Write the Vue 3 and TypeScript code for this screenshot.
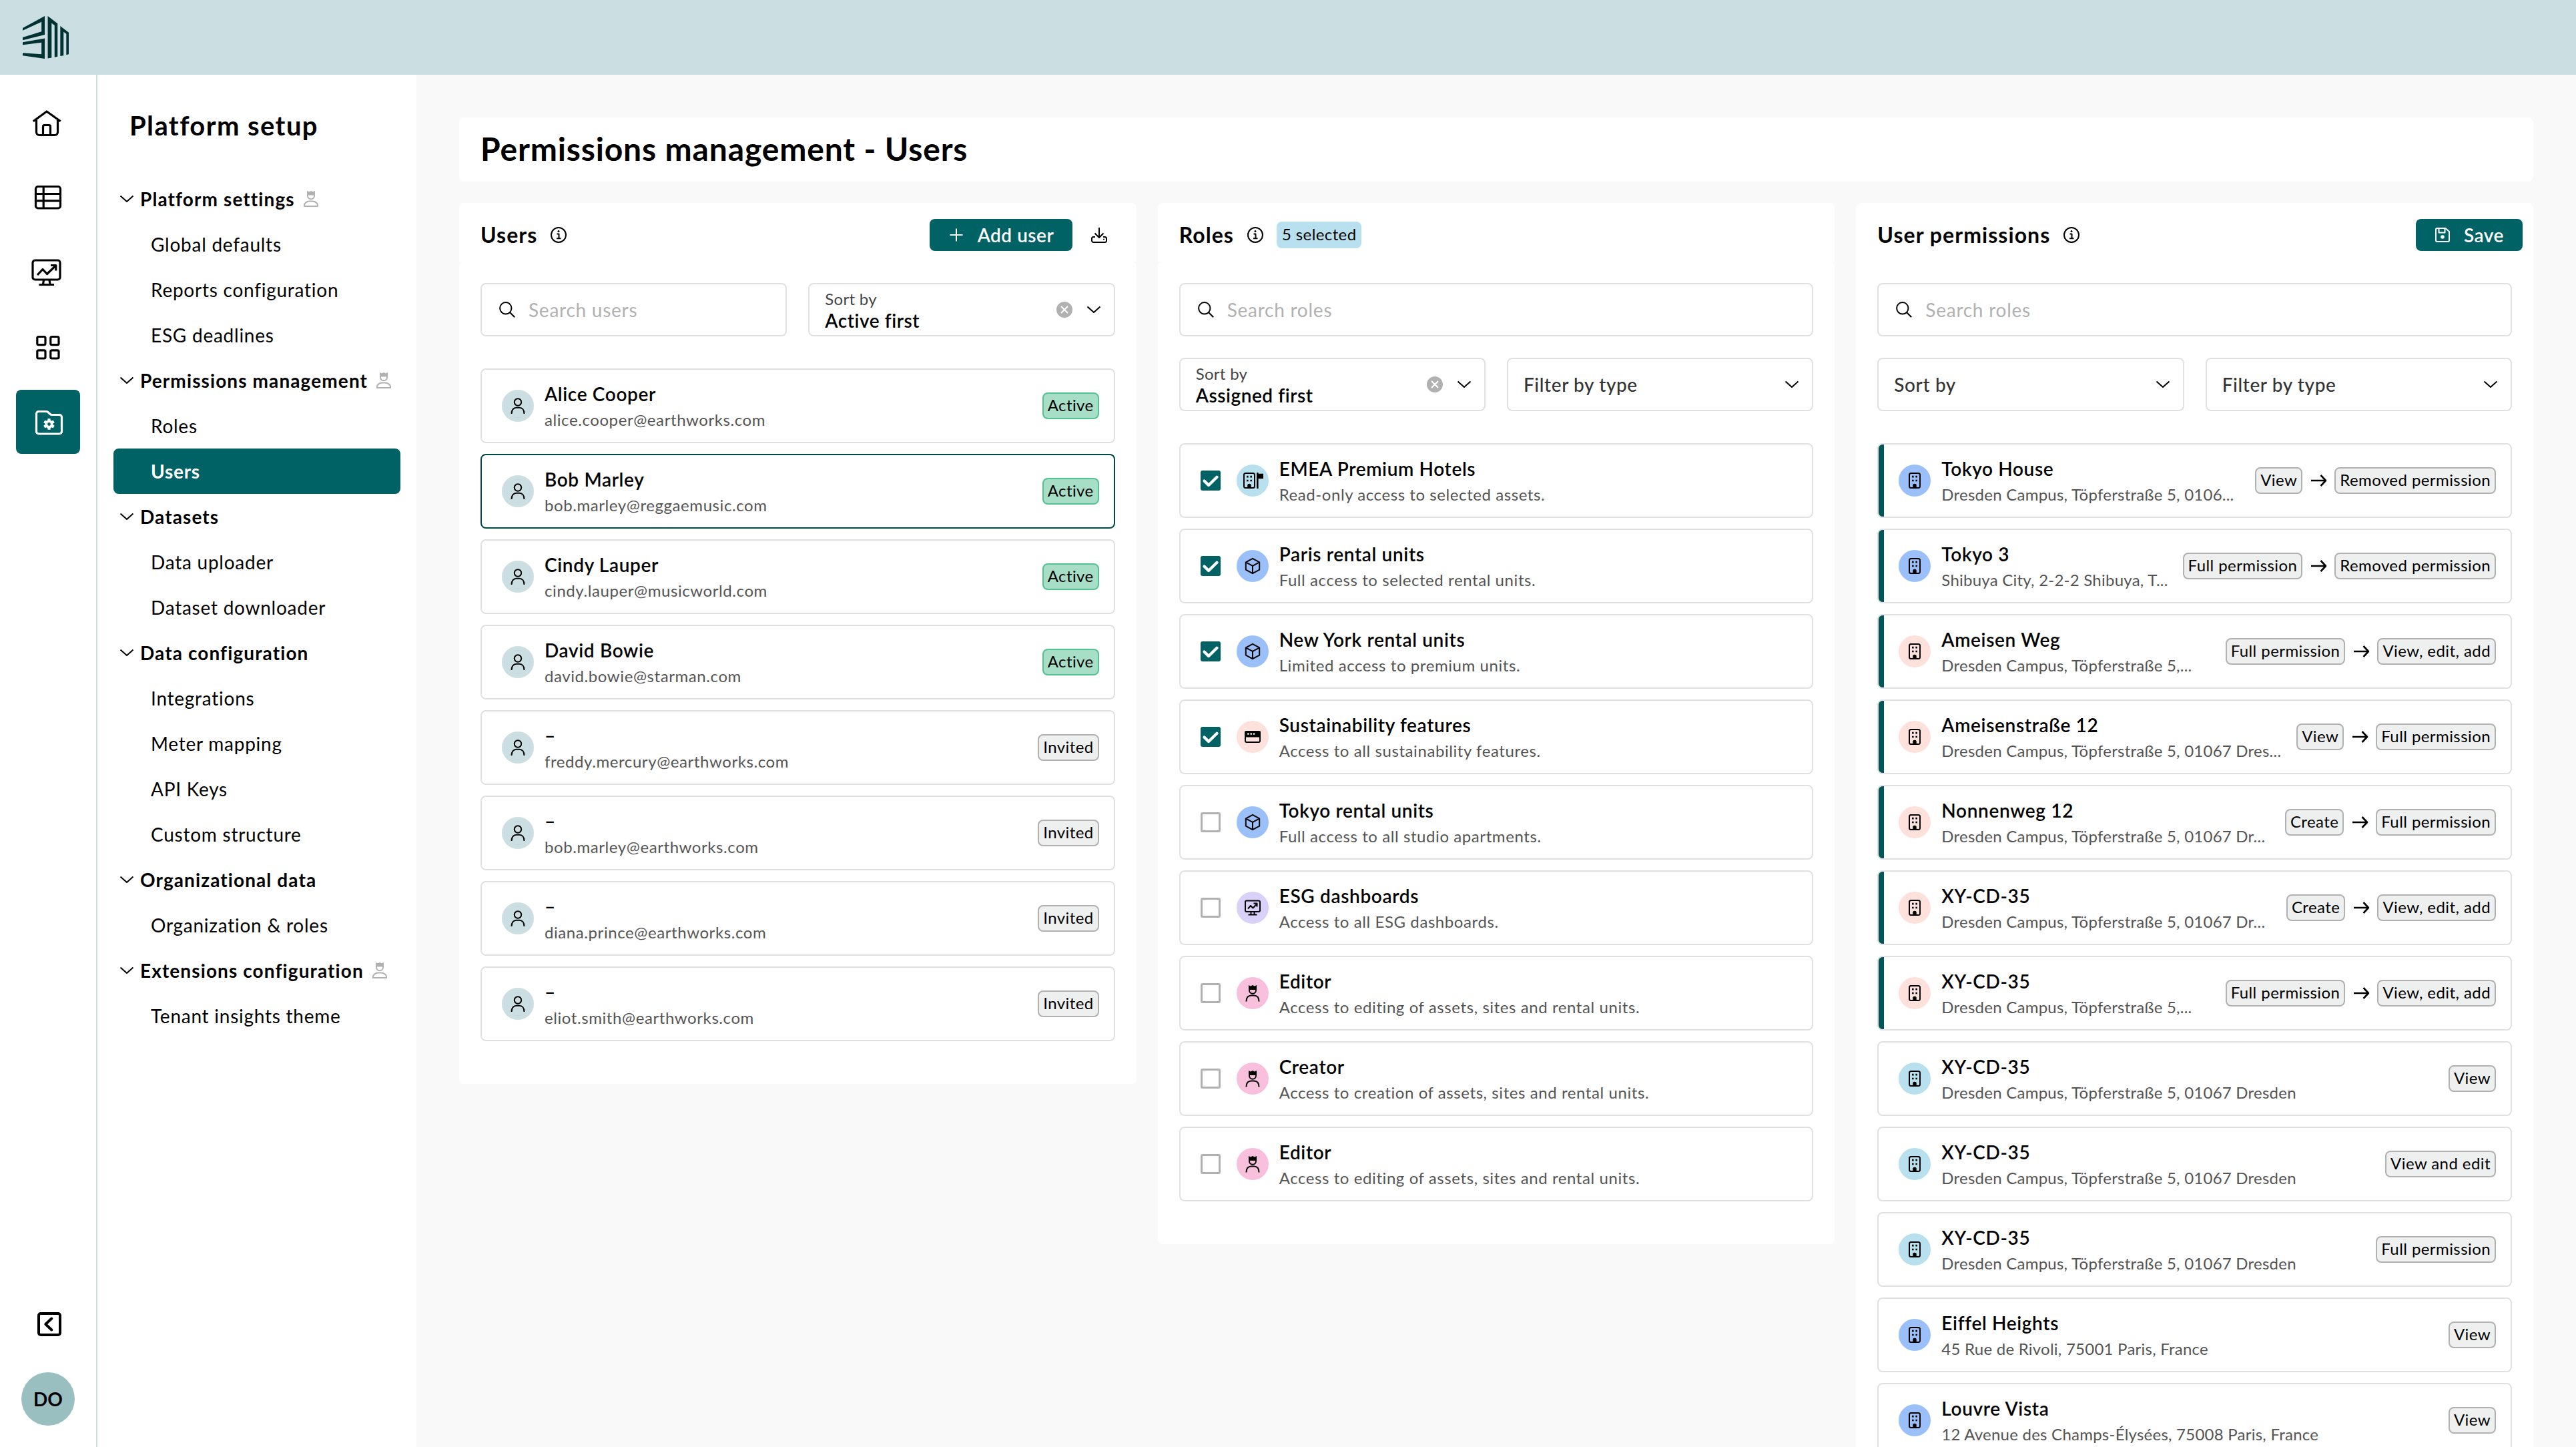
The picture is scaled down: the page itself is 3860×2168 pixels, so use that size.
<script setup lang="ts">
type NavGroup = { title: string; restricted?: boolean; items: string[] }
type User = { name: string; email: string; status: 'Active' | 'Invited' }
type Role = { name: string; note: string; icon: string; tone: string; checked: boolean }
type Permission = { name: string; address: string; tone: string; from?: string; to: string }

const buildingShape =
  '<rect x="4" y="1" width="16" height="22" rx="2.5"/><path d="M8 6.200h2.600M13.400 6.200H16M8 12h2.600M13.400 12H16" stroke-width="2.700"/><path d="M9.800 23v-4.500a1.200 1.200 0 0 1 1.200-1.200h2a1.200 1.200 0 0 1 1.200 1.200V23z" fill="currentColor" stroke-width="1"/>'

const icons: Record<string, string> = {
  chevron: '<path d="M2.500 7.500 12 16l9.500-8.500"/>',
  info: '<circle cx="12" cy="12" r="11"/><path d="M9.500 10.500H12.500V17M9 17.300h6.500"/><circle cx="12" cy="6.600" r="1.500" fill="currentColor" stroke="none"/>',
  plus: '<path d="M12 2.500v19M2.500 12h19"/>',
  download:
    '<path d="M12 1v14.500M5.500 9.500l6.500 6.500 6.500-6.500"/><path d="M6 15H3.500A2.500 2.500 0 0 0 1 17.500v3A2.500 2.500 0 0 0 3.500 23h17a2.500 2.500 0 0 0 2.500-2.500v-3a2.500 2.500 0 0 0-2.500-2.500H18"/><circle cx="19" cy="18.500" r="1.100" fill="currentColor" stroke="none"/>',
  save: '<path d="M4 2h12.500L22 7v13a2 2 0 0 1-2 2H4a2 2 0 0 1-2-2V4a2 2 0 0 1 2-2z"/><path d="M6.500 2.500V8.500h9V2.500"/><circle cx="12" cy="15" r="2.800" fill="currentColor" stroke="none"/>',
  search: '<circle cx="9.800" cy="9.800" r="8.700"/><path d="M16 16l7.200 7.200"/>',
  arrow: '<path d="M1 12h21.500M15.500 4l7.500 8-7.500 8"/>',
  person: '<circle cx="12" cy="6.500" r="5.200"/><path d="M2.500 24c0-5.800 3-9.300 7.500-9.300h4c4.500 0 7.500 3.500 7.500 9.300"/>',
  crown:
    '<path d="M7 6v1.800a5 5 0 0 0 10 0V6"/><path d="M6 0l3 1.500L12 0l3 1.500L18 0v7H6z" fill="currentColor" stroke="none"/><path d="M2.500 24.500c0-5.800 3-9 7.500-9h4c4.500 0 7.500 3.200 7.500 9"/>',
  admin:
    '<path d="M7 6v1.200a5 5 0 0 0 10 0V6" /><path d="M6 0l3 1.200L12 0l3 1.200L18 0v6.500H6z" fill="currentColor" stroke="none"/><path d="M10 15.500h4c4.500 0 8 3 8 6v1.500H2v-1.500c0-3 3.500-6 8-6z"/>',
  building: buildingShape,
  hotel:
    '<g transform="translate(-5 0)">' + buildingShape + '</g><path d="M19.300 0v24" stroke-width="2.600"/><path d="M20 1.700h8v7.500H20z" fill="currentColor" stroke="none"/>',
  cube: '<path d="M12 .8 22.200 6.300v11.400L12 23.200 1.800 17.700V6.300z"/><path d="M1.800 6.300 12 11.800l10.200-5.500M12 11.800v11.400"/>',
  window: '<rect x="1" y="4" width="22" height="16" rx="2"/><path d="M1 4.500h22V11.500H1z" fill="currentColor"/><path d="M4.200 7.500h2.400M8.500 7.500h2.400M12.800 7.500h2.400" stroke="#ffe1dc" stroke-width="2.400"/>',
  screen:
    '<rect x="1" y="1.500" width="22" height="16.500" rx="2"/><path d="M5 13.500l4-4.500 3.500 3.500L18 6.500M13.500 5.500h5v5"/><path d="M9.500 18v4M14.500 18v4M5.500 22.500h13"/>',
  check: '<path d="M5.500 15.500 12 22 24.500 9.800"/>',
}

const railIcons: string[] = [
  '<path d="M25.800 45.800 46 31l20.700 14.800"/><path d="M30.500 43.500v18.500a4.500 4.500 0 0 0 4.500 4.500h23a4.500 4.500 0 0 0 4.500-4.500V43.500M40.500 66V53.500a2 2 0 0 1 2-2h7a2 2 0 0 1 2 2V66"/>',
  '<rect x="29.500" y="31.500" width="37" height="32.500" rx="3.500"/><path d="M41.200 31.500v32.500M29.500 42.500h37M29.500 52.800h37"/>',
  '<rect x="25" y="30" width="41" height="29" rx="3.500"/><path d="M32 52l8-8.500 6.500 7L59 38.500M52 37.500h7.800v8M41.500 59.500 40.500 66M50 59.500l1 6.500M34.500 66.500h22.500"/>',
  '<rect x="31.800" y="32.500" width="12.200" height="12.200" rx="2"/><rect x="51.800" y="32.500" width="12.200" height="12.200" rx="2"/><rect x="31.800" y="52.800" width="12.200" height="12.200" rx="2"/><rect x="51.800" y="52.800" width="12.200" height="12.200" rx="2"/>',
  '<path d="M34 32.500h11.500a3 3 0 0 1 2 .8l4 3.500a3 3 0 0 0 2 .7H65a3.500 3.500 0 0 1 3.500 3.500v21.500a3.500 3.500 0 0 1-3.500 3.500H34a3.500 3.500 0 0 1-3.500-3.500V36a3.500 3.500 0 0 1 3.500-3.500z"/><circle cx="49.500" cy="51.500" r="4.300" stroke-width="3.800"/><path d="M49.500 43.200v3M49.500 56.800v3M42.300 47.400l2.600 1.500M54.100 54.100l2.600 1.500M42.300 55.600l2.600-1.500M54.100 48.900l2.600-1.500" stroke-width="4.200"/>',
]
const activeRail = 4

const nav: NavGroup[] = [
  { title: 'Platform settings', restricted: true, items: ['Global defaults', 'Reports configuration', 'ESG deadlines'] },
  { title: 'Permissions management', restricted: true, items: ['Roles', 'Users'] },
  { title: 'Datasets', items: ['Data uploader', 'Dataset downloader'] },
  { title: 'Data configuration', items: ['Integrations', 'Meter mapping', 'API Keys', 'Custom structure'] },
  { title: 'Organizational data', items: ['Organization & roles'] },
  { title: 'Extensions configuration', restricted: true, items: ['Tenant insights theme'] },
]

const users: User[] = [
  { name: 'Alice Cooper', email: 'alice.cooper@earthworks.com', status: 'Active' },
  { name: 'Bob Marley', email: 'bob.marley@reggaemusic.com', status: 'Active' },
  { name: 'Cindy Lauper', email: 'cindy.lauper@musicworld.com', status: 'Active' },
  { name: 'David Bowie', email: 'david.bowie@starman.com', status: 'Active' },
  { name: '–', email: 'freddy.mercury@earthworks.com', status: 'Invited' },
  { name: '–', email: 'bob.marley@earthworks.com', status: 'Invited' },
  { name: '–', email: 'diana.prince@earthworks.com', status: 'Invited' },
  { name: '–', email: 'eliot.smith@earthworks.com', status: 'Invited' },
]

const roles: Role[] = [
  { name: 'EMEA Premium Hotels', note: 'Read-only access to selected assets.', icon: 'hotel', tone: 'sky', checked: true },
  { name: 'Paris rental units', note: 'Full access to selected rental units.', icon: 'cube', tone: 'blue', checked: true },
  { name: 'New York rental units', note: 'Limited access to premium units.', icon: 'cube', tone: 'blue', checked: true },
  { name: 'Sustainability features', note: 'Access to all sustainability features.', icon: 'window', tone: 'rose', checked: true },
  { name: 'Tokyo rental units', note: 'Full access to all studio apartments.', icon: 'cube', tone: 'blue', checked: false },
  { name: 'ESG dashboards', note: 'Access to all ESG dashboards.', icon: 'screen', tone: 'violet', checked: false },
  { name: 'Editor', note: 'Access to editing of assets, sites and rental units.', icon: 'crown', tone: 'pink', checked: false },
  { name: 'Creator', note: 'Access to creation of assets, sites and rental units.', icon: 'crown', tone: 'pink', checked: false },
  { name: 'Editor', note: 'Access to editing of assets, sites and rental units.', icon: 'crown', tone: 'pink', checked: false },
]

const permissions: Permission[] = [
  { name: 'Tokyo House', address: 'Dresden Campus, Töpferstraße 5, 0106...', tone: 'blue', from: 'View', to: 'Removed permission' },
  { name: 'Tokyo 3', address: 'Shibuya City, 2-2-2 Shibuya, T...', tone: 'blue', from: 'Full permission', to: 'Removed permission' },
  { name: 'Ameisen Weg', address: 'Dresden Campus, Töpferstraße 5,...', tone: 'rose', from: 'Full permission', to: 'View, edit, add' },
  { name: 'Ameisenstraße 12', address: 'Dresden Campus, Töpferstraße 5, 01067 Dres...', tone: 'rose', from: 'View', to: 'Full permission' },
  { name: 'Nonnenweg 12', address: 'Dresden Campus, Töpferstraße 5, 01067 Dr...', tone: 'rose', from: 'Create', to: 'Full permission' },
  { name: 'XY-CD-35', address: 'Dresden Campus, Töpferstraße 5, 01067 Dr...', tone: 'rose', from: 'Create', to: 'View, edit, add' },
  { name: 'XY-CD-35', address: 'Dresden Campus, Töpferstraße 5,...', tone: 'rose', from: 'Full permission', to: 'View, edit, add' },
  { name: 'XY-CD-35', address: 'Dresden Campus, Töpferstraße 5, 01067 Dresden', tone: 'sky', to: 'View' },
  { name: 'XY-CD-35', address: 'Dresden Campus, Töpferstraße 5, 01067 Dresden', tone: 'sky', to: 'View and edit' },
  { name: 'XY-CD-35', address: 'Dresden Campus, Töpferstraße 5, 01067 Dresden', tone: 'sky', to: 'Full permission' },
  { name: 'Eiffel Heights', address: '45 Rue de Rivoli, 75001 Paris, France', tone: 'blue', to: 'View' },
  { name: 'Louvre Vista', address: '12 Avenue des Champs-Élysées, 75008 Paris, France', tone: 'blue', to: 'View' },
]
</script>

<template>
  <div class="app">
    <header class="topbar">
      <svg class="logo" viewBox="83 49 169 132" preserveAspectRatio="none">
        <path d="M83 86 164 49V107L83 124V115L152 97V67L83 94z" />
        <path d="M83 130 164 118V181L83 171V163L152 167V131L83 138z" />
        <path d="M175 49 211 72V174L200 177V78L189 71V178L175 180z" />
        <path d="M221 80 252 100V167L243 169V104L233 98V171L221 173z" />
      </svg>
    </header>

    <div class="body">
      <aside class="rail">
        <button
          v-for="(shape, i) in railIcons"
          :key="i"
          class="rail-btn"
          :class="{ active: i === activeRail }"
        >
          <svg viewBox="0 0 96 96" v-html="shape"></svg>
        </button>
        <div class="rail-foot">
          <svg class="collapse" viewBox="0 0 36 36">
            <rect x="2" y="2" width="32" height="32" rx="3" />
            <path d="M21.300 9.500 12.300 18l9 8.500" />
          </svg>
          <div class="avatar">DO</div>
        </div>
      </aside>

      <nav class="sidebar">
        <h2 class="side-title">Platform setup</h2>
        <template v-for="group in nav" :key="group.title">
          <div class="nav-row nav-group">
            <svg class="ico chev" viewBox="0 0 24 24" v-html="icons.chevron"></svg>
            <span>{{ group.title }}</span>
            <svg v-if="group.restricted" class="ico lock" viewBox="0 0 24 24" v-html="icons.admin"></svg>
          </div>
          <div
            v-for="item in group.items"
            :key="item"
            class="nav-row nav-item"
            :class="{ current: item === 'Users' }"
          >
            {{ item }}
          </div>
        </template>
      </nav>

      <main class="main">
        <section class="title-card"><h1>Permissions management - Users</h1></section>

        <div class="columns">
          <section class="panel">
            <div class="panel-head">
              <h2>Users</h2>
              <svg class="ico" viewBox="0 0 24 24" v-html="icons.info"></svg>
              <div class="actions wide">
                <button class="btn add">
                  <svg class="ico" viewBox="0 0 24 24" v-html="icons.plus"></svg>Add user
                </button>
                <svg class="ico" viewBox="0 0 24 24" v-html="icons.download"></svg>
              </div>
            </div>
            <div class="panel-body">
              <div class="fields">
                <div class="field">
                  <svg class="ico" viewBox="0 0 24 24" v-html="icons.search"></svg>
                  <span class="placeholder">Search users</span>
                </div>
                <div class="field select">
                  <div class="stack"><small>Sort by</small><b>Active first</b></div>
                  <svg class="clear" viewBox="0 0 24 24"><circle cx="12" cy="12" r="12" /><path d="M7 7l10 10M17 7 7 17" /></svg>
                  <svg class="ico" viewBox="0 0 24 24" v-html="icons.chevron"></svg>
                </div>
              </div>
              <div class="list">
                <article v-for="user in users" :key="user.email" class="card" :class="{ selected: user.name === 'Bob Marley' }">
                  <span class="disc teal"><svg class="ico" viewBox="0 0 24 24" v-html="icons.person"></svg></span>
                  <div class="text"><strong>{{ user.name }}</strong><span>{{ user.email }}</span></div>
                  <span class="badge" :class="{ ok: user.status === 'Active' }">{{ user.status }}</span>
                </article>
              </div>
            </div>
          </section>

          <section class="panel">
            <div class="panel-head">
              <h2>Roles</h2>
              <svg class="ico" viewBox="0 0 24 24" v-html="icons.info"></svg>
              <span class="count">5 selected</span>
            </div>
            <div class="panel-body">
              <div class="fields">
                <div class="field">
                  <svg class="ico" viewBox="0 0 24 24" v-html="icons.search"></svg>
                  <span class="placeholder">Search roles</span>
                </div>
              </div>
              <div class="fields">
                <div class="field select">
                  <div class="stack"><small>Sort by</small><b>Assigned first</b></div>
                  <svg class="clear" viewBox="0 0 24 24"><circle cx="12" cy="12" r="12" /><path d="M7 7l10 10M17 7 7 17" /></svg>
                  <svg class="ico" viewBox="0 0 24 24" v-html="icons.chevron"></svg>
                </div>
                <div class="field select">
                  <span class="label">Filter by type</span>
                  <svg class="ico" viewBox="0 0 24 24" v-html="icons.chevron"></svg>
                </div>
              </div>
              <div class="list">
                <article v-for="(role, i) in roles" :key="i" class="card">
                  <span class="box" :class="{ on: role.checked }">
                    <svg v-if="role.checked" viewBox="0 0 30 30" v-html="icons.check"></svg>
                  </span>
                  <span class="disc" :class="role.tone"><svg class="ico" viewBox="0 0 24 24" v-html="icons[role.icon]"></svg></span>
                  <div class="text"><strong>{{ role.name }}</strong><span>{{ role.note }}</span></div>
                </article>
              </div>
            </div>
          </section>

          <section class="panel seamless">
            <div class="panel-head">
              <h2>User permissions</h2>
              <svg class="ico" viewBox="0 0 24 24" v-html="icons.info"></svg>
              <div class="actions">
                <button class="btn save">
                  <svg class="ico" viewBox="0 0 24 24" v-html="icons.save"></svg>Save
                </button>
              </div>
            </div>
            <div class="panel-body">
              <div class="fields">
                <div class="field">
                  <svg class="ico" viewBox="0 0 24 24" v-html="icons.search"></svg>
                  <span class="placeholder">Search roles</span>
                </div>
              </div>
              <div class="fields">
                <div class="field select">
                  <span class="label">Sort by</span>
                  <svg class="ico" viewBox="0 0 24 24" v-html="icons.chevron"></svg>
                </div>
                <div class="field select">
                  <span class="label">Filter by type</span>
                  <svg class="ico" viewBox="0 0 24 24" v-html="icons.chevron"></svg>
                </div>
              </div>
              <div class="list">
                <article v-for="(item, i) in permissions" :key="i" class="card" :class="{ changed: item.from }">
                  <span class="disc" :class="item.tone"><svg class="ico" viewBox="0 0 24 24" v-html="icons.building"></svg></span>
                  <div class="text address"><strong>{{ item.name }}</strong><span>{{ item.address }}</span></div>
                  <template v-if="item.from">
                    <span class="badge">{{ item.from }}</span>
                    <svg class="ico arrow" viewBox="0 0 24 24" v-html="icons.arrow"></svg>
                  </template>
                  <span class="badge">{{ item.to }}</span>
                </article>
              </div>
            </div>
          </section>
        </div>
      </main>
    </div>
  </div>
</template>

<style>
body {
  margin: 0;
  background: #f9f9f9;
}
</style>

<style scoped>
.app {
  height: 2168px;
  overflow: hidden;
  display: flex;
  flex-direction: column;
  font-family: Lato, "Noto Sans", sans-serif;
  font-size: 28px;
  color: #000;
  background: #f9f9f9;
}
.app * {
  box-sizing: border-box;
}
h1,
h2 {
  margin: 0;
  font-weight: 700;
}
button {
  border: 0;
  padding: 0;
  background: none;
  font: inherit;
  color: inherit;
}
svg {
  display: block;
  flex: none;
}
.ico {
  width: 24px;
  height: 24px;
  overflow: visible;
  fill: none;
  stroke: currentColor;
  stroke-width: 2;
  stroke-linejoin: round;
}

.topbar {
  height: 112px;
  flex: none;
  display: flex;
  align-items: center;
  padding-left: 34px;
  background: #cbdee1;
}
.logo {
  width: 69px;
  height: 64px;
  fill: #003233;
}
.body {
  flex: 1;
  min-height: 0;
  display: flex;
}

.rail {
  width: 146px;
  flex: none;
  padding: 24px 24px 32px;
  display: flex;
  flex-direction: column;
  gap: 16px;
  background: #fff;
  border-right: 2px solid #cbdee1;
}
.rail-btn {
  width: 96px;
  height: 96px;
  border-radius: 8px;
}
.rail-btn svg,
.collapse {
  fill: none;
  stroke: currentColor;
  stroke-width: 3.2;
  stroke-linejoin: round;
}
.rail-btn svg {
  width: 96px;
  height: 96px;
}
.rail-btn.active {
  background: #006265;
  color: #fff;
}
.rail-foot {
  margin-top: auto;
  display: flex;
  flex-direction: column;
  gap: 54px;
}
.collapse {
  width: 36px;
  height: 36px;
  margin-left: 32px;
  stroke-width: 4;
  stroke-linecap: round;
}
.avatar {
  width: 80px;
  height: 80px;
  margin-left: 8px;
  border-radius: 50%;
  background: #9abfc1;
  text-align: center;
  line-height: 80px;
  font-weight: 700;
}

.sidebar {
  width: 478px;
  flex: none;
  padding: 52px 24px 0;
  background: #fff;
}
.side-title {
  margin: 0 0 51px 24px;
  font-size: 40px;
  line-height: 49px;
  letter-spacing: 1.4px;
}
.nav-row {
  height: 68px;
  display: flex;
  align-items: center;
  border-radius: 8px;
  white-space: nowrap;
}
.nav-group {
  padding-left: 8px;
  font-weight: 700;
  letter-spacing: 1.1px;
}
.nav-group .chev {
  margin-right: 8px;
}
.nav-group .lock {
  margin-left: 12px;
  color: #b1b1b1;
}
.nav-item {
  padding-left: 56px;
  letter-spacing: 0.75px;
}
.nav-item.current {
  background: #006265;
  color: #fff;
  font-weight: 700;
}

.main {
  flex: 1;
  min-width: 0;
  padding: 64px 64px 0;
}
.title-card {
  height: 96px;
  padding: 0 32px 4px;
  display: flex;
  align-items: center;
  border-radius: 8px;
  background: #fff;
}
h1 {
  font-size: 48px;
  letter-spacing: 0.85px;
}
.columns {
  margin-top: 32px;
  display: grid;
  grid-template-columns: repeat(3, minmax(0, 1fr));
  gap: 32px;
  align-items: start;
}
.panel-head {
  height: 88px;
  padding: 8px 16px 0 32px;
  display: flex;
  align-items: center;
  background: #fff;
  border-radius: 8px 8px 0 0;
}
.panel-head h2 {
  font-size: 32px;
  letter-spacing: 1.05px;
  margin-right: 20px;
  padding-bottom: 2px;
}
.panel-body {
  padding: 32px 32px 64px;
  background: #fff;
  border-radius: 8px;
}
.seamless .panel-body {
  border-radius: 0 0 8px 8px;
}
.actions {
  margin-left: auto;
  display: flex;
  align-items: center;
}
.actions.wide {
  gap: 28px;
  margin-right: 28px;
}
.btn {
  height: 48px;
  display: flex;
  align-items: center;
  gap: 20px;
  border-radius: 8px;
  background: #006265;
  color: #fff;
  font-weight: 600;
  letter-spacing: 0.5px;
}
.add {
  width: 214px;
  padding-left: 28px;
}
.save {
  width: 160px;
  padding-left: 28px;
  gap: 20px;
}
.count {
  height: 40px;
  margin-left: 20px;
  padding: 0 7px 0 8px;
  border-radius: 8px;
  background: #b9e0ee;
  font-size: 24px;
  line-height: 38px;
  letter-spacing: 0.4px;
}

.fields {
  display: grid;
  grid-auto-flow: column;
  grid-auto-columns: minmax(0, 1fr);
  gap: 32px;
  margin-bottom: 32px;
}
.field {
  height: 80px;
  padding: 0 26px;
  display: flex;
  align-items: center;
  border: 2px solid #e1e1e1;
  border-radius: 8px;
}
.select {
  padding: 0 18px 0 23px;
}
.placeholder {
  margin-left: 20px;
  color: #b1b1b1;
  letter-spacing: 0.75px;
}
.label {
  margin-right: auto;
  color: #333;
  font-weight: 500;
  letter-spacing: 0.6px;
}
.stack {
  margin-right: auto;
  padding-bottom: 1px;
  display: flex;
  flex-direction: column;
}
.stack small {
  font-size: 24px;
  line-height: 32px;
  color: #444;
  letter-spacing: 0.3px;
}
.stack b {
  font-weight: 600;
  line-height: 32px;
  letter-spacing: 0.55px;
}
.clear {
  width: 24px;
  height: 24px;
  margin-right: 20px;
  fill: #b1b1b1;
  stroke: none;
}
.clear path {
  stroke: #fff;
  stroke-width: 2;
}

.list {
  margin-top: 48px;
  display: flex;
  flex-direction: column;
  gap: 16px;
}
.card {
  height: 112px;
  padding: 0 22px 0 30px;
  display: flex;
  align-items: center;
  border: 2px solid #e1e1e1;
  border-radius: 8px;
}
.card.selected {
  border-color: #00474a;
}
.card.changed {
  background: linear-gradient(90deg, #005558 8px, #fff 8px);
}
.disc {
  width: 48px;
  height: 48px;
  flex: none;
  display: flex;
  align-items: center;
  justify-content: center;
  border-radius: 50%;
}
.teal { background: #cbdee1; }
.sky { background: #b9e0ee; }
.blue { background: #9bc0f9; }
.rose { background: #ffe1dc; }
.violet { background: #d9d1f8; }
.pink { background: #f8c0dc; }
.text {
  margin-left: 16px;
  margin-right: auto;
  padding-top: 1px;
  display: flex;
  flex-direction: column;
  white-space: nowrap;
}
.text strong {
  font-weight: 600;
  line-height: 40px;
  letter-spacing: 0.65px;
}
.text span {
  font-size: 24px;
  line-height: 38px;
  color: #545454;
  letter-spacing: 0.58px;
}
.text.address span {
  letter-spacing: 0.24px;
}
.badge {
  height: 40px;
  padding: 0 6px;
  border: 2px solid #b1b1b1;
  border-radius: 8px;
  background: #eef0ef;
  font-size: 24px;
  line-height: 34px;
  letter-spacing: 0.42px;
  white-space: nowrap;
}
.badge.ok {
  border-color: #56c192;
  background: #a6dfc6;
}
.arrow {
  margin: 0 12px;
  stroke-width: 2.6;
}
.box {
  width: 30px;
  height: 30px;
  flex: none;
  margin-right: 24px;
  border: 3px solid #b1b1b1;
  border-radius: 3px;
}
.box.on {
  border: 0;
  background: #006265;
}
.box svg {
  width: 30px;
  height: 30px;
  fill: none;
  stroke: #fff;
  stroke-width: 4.4;
  stroke-linecap: round;
  stroke-linejoin: round;
}
</style>
